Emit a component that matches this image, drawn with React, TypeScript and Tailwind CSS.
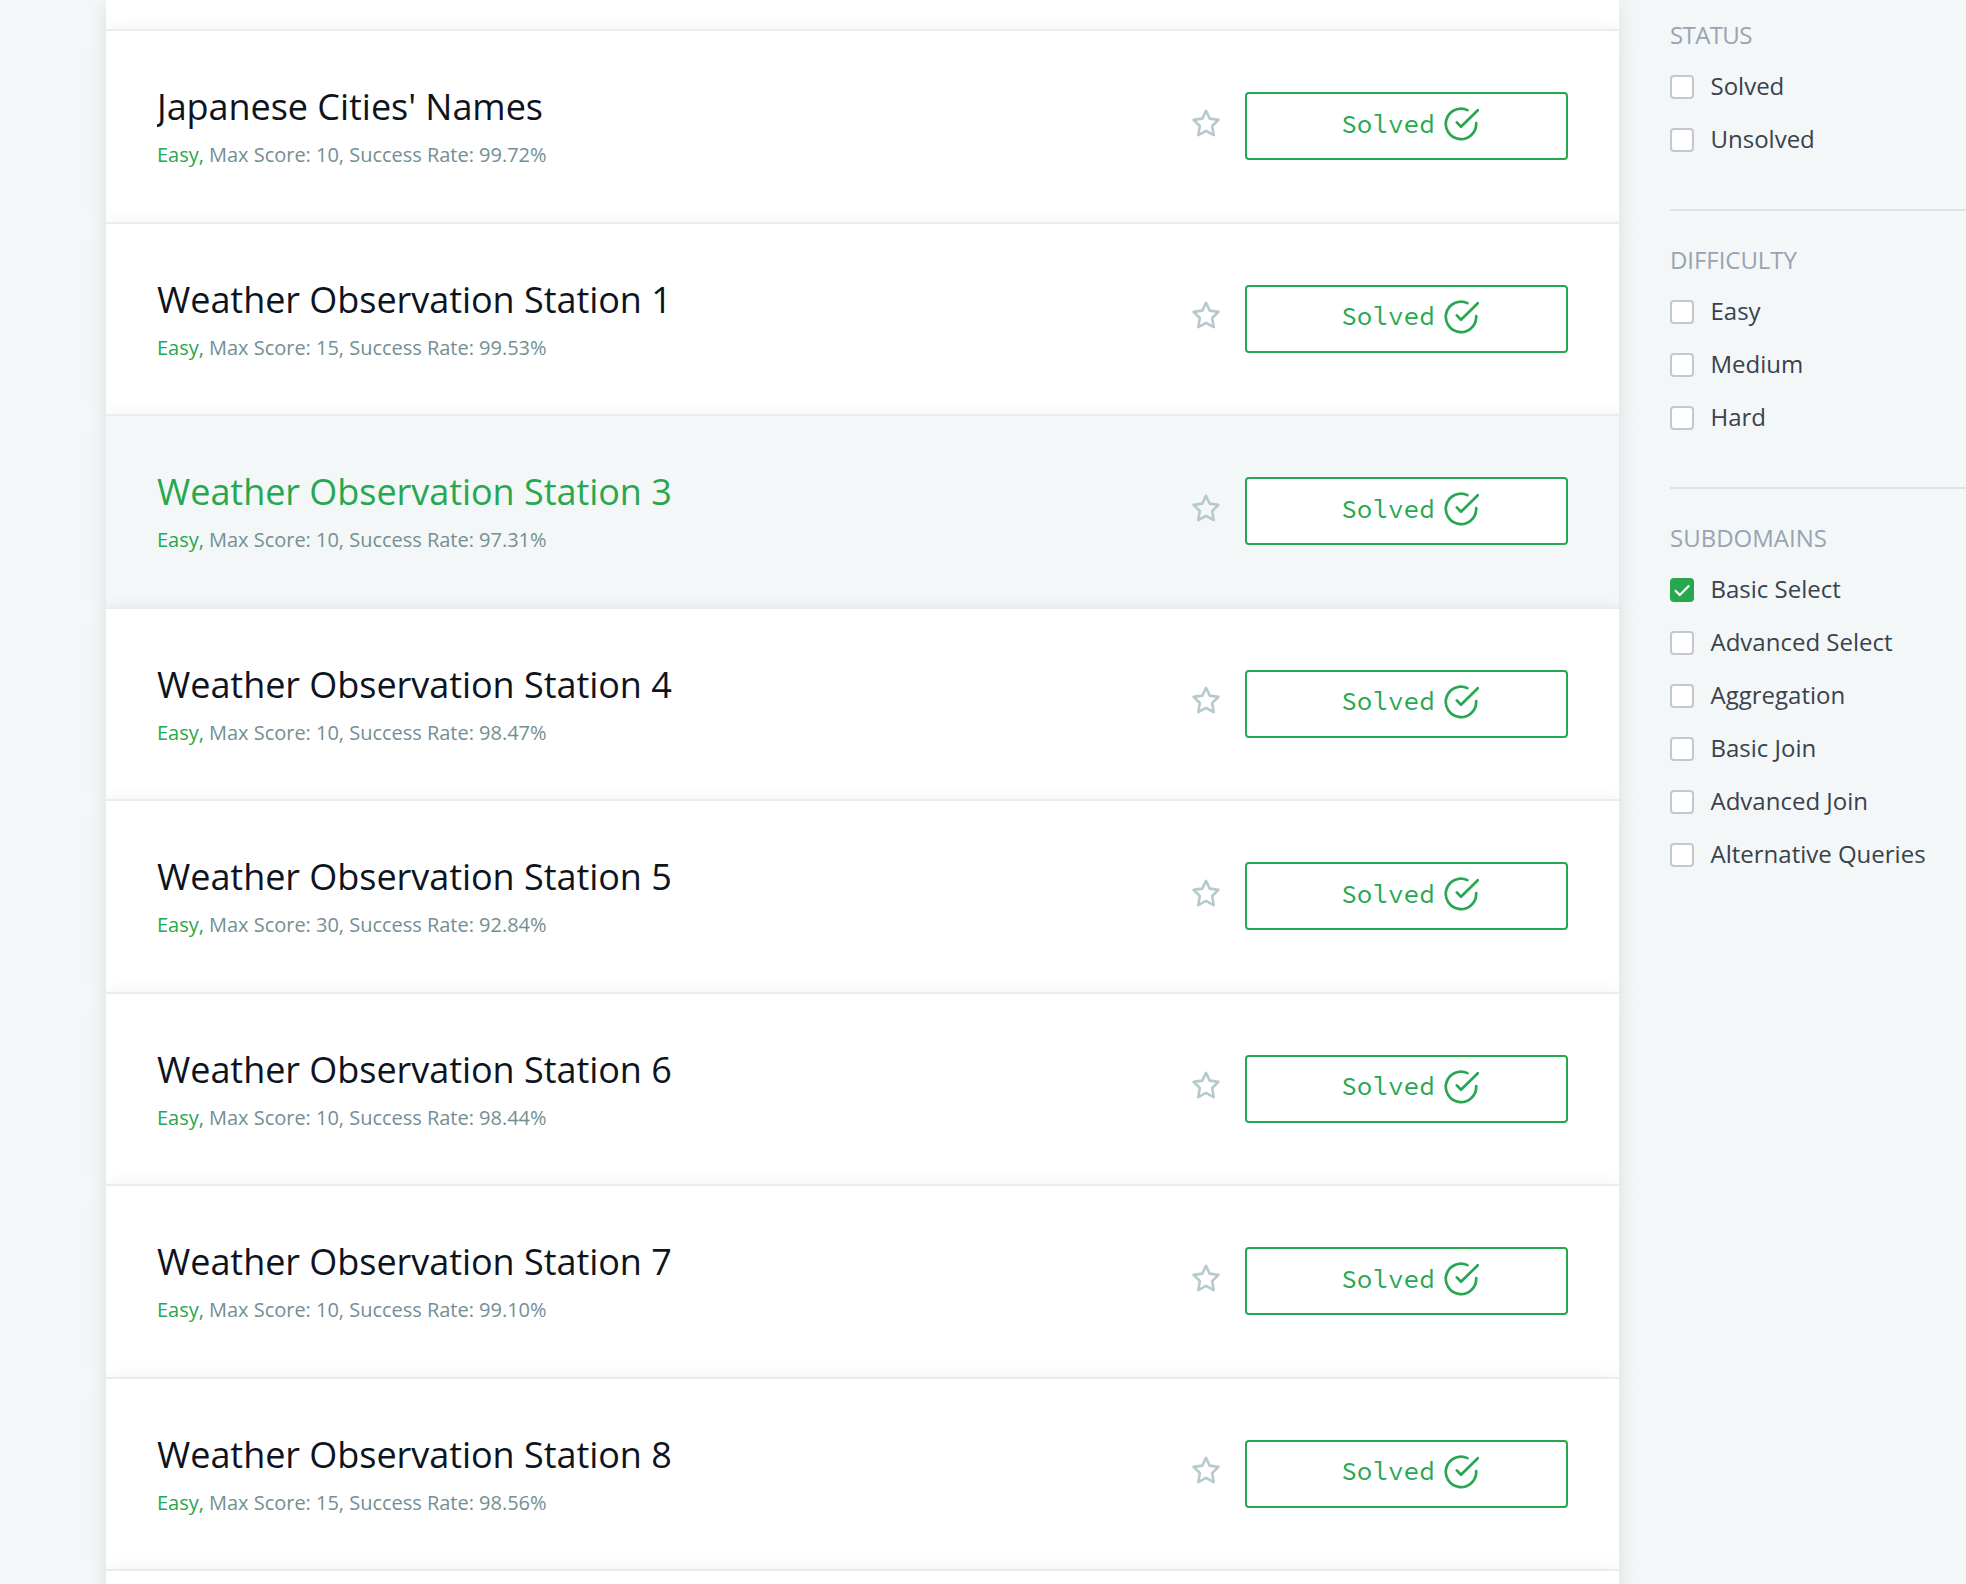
type Challenge = { title: string; score: number; rate: string; active?: boolean };

const challenges: Challenge[] = [
  { title: "Japanese Cities' Names", score: 10, rate: "99.72" },
  { title: "Weather Observation Station 1", score: 15, rate: "99.53" },
  { title: "Weather Observation Station 3", score: 10, rate: "97.31", active: true },
  { title: "Weather Observation Station 4", score: 10, rate: "98.47" },
  { title: "Weather Observation Station 5", score: 30, rate: "92.84" },
  { title: "Weather Observation Station 6", score: 10, rate: "98.44" },
  { title: "Weather Observation Station 7", score: 10, rate: "99.10" },
  { title: "Weather Observation Station 8", score: 15, rate: "98.56" },
];

const groups = [
  { name: "STATUS", tracking: "tracking-[-0.6px]", options: ["Solved", "Unsolved"] },
  { name: "DIFFICULTY", tracking: "tracking-[-0.05px]", options: ["Easy", "Medium", "Hard"] },
  {
    name: "SUBDOMAINS",
    tracking: "tracking-normal",
    options: ["Basic Select", "Advanced Select", "Aggregation", "Basic Join", "Advanced Join", "Alternative Queries"],
  },
];

const cardFrame = "border-t-2 border-[#e7eef0] shadow-[0_5px_20px_rgba(0,0,0,0.1)]";

function StarIcon() {
  return (
    <svg viewBox="0 0 28 28" className="h-7 w-7" fill="none" stroke="#b7c9cc" strokeWidth="2.6" strokeLinejoin="round">
      <path d="M14 1.8 17.7 9.6 26.4 10.9 20.2 17 21.7 26.1 14 21.8 6.3 26.1 7.8 17 1.6 10.9 10.3 9.6Z" />
    </svg>
  );
}

function CheckCircleIcon() {
  return (
    <svg
      viewBox="0 0 36 36"
      className="h-9 w-9"
      fill="none"
      stroke="currentColor"
      strokeWidth="2.7"
      strokeLinecap="round"
      strokeLinejoin="round"
    >
      <path d="M33.2 17.2v.8a15.2 15.2 0 1 1-8.8-13.9" />
      <path d="M34.8 4.2 18 20.8 13.8 16.4" />
    </svg>
  );
}

function ChallengeRow({ title, score, rate, active }: Challenge) {
  return (
    <div
      className={`flex h-[192.5px] items-start justify-between px-[51px] ${cardFrame} ${active ? "bg-[#f3f7f7]" : "bg-white"}`}
    >
      <div className="overflow-hidden pt-[51px]">
        <h4 className={`text-[36px] leading-[50px] tracking-[-0.04px] ${active ? "text-[#27a750]" : "text-[#0e141e]"}`}>
          {title}
        </h4>
        <p className="mt-[8px] text-[20px] leading-[30px] tracking-[-0.02px] text-[#738f93]">
          <span className="text-[#27a750]">Easy,</span> Max Score: {score}, Success Rate: {rate}%
        </p>
      </div>
      <div className="flex items-center pt-[61px]">
        <div className="-mt-[6.5px] mr-[25px]">
          <StarIcon />
        </div>
        <button className="flex h-[68px] w-[323px] items-center justify-center gap-[8px] rounded-[4px] border-2 border-[#27a750] bg-white pb-[4px] pl-[7px] font-['Source_Code_Pro','Liberation_Mono',monospace] text-[26px] text-[#27a750]">
          <span className="-mt-[2px]">Solved</span>
          <CheckCircleIcon />
        </button>
      </div>
    </div>
  );
}

function Checkbox({ checked }: { checked: boolean }) {
  if (!checked) return <span className="h-6 w-6 rounded-[4px] border-2 border-[#c2c7d0] bg-white" />;
  return (
    <span className="h-6 w-6 rounded-[4px] bg-[#27a750]">
      <svg viewBox="0 0 24 24" className="h-6 w-6" fill="none" stroke="#fff" strokeWidth="2.1">
        <path d="M5 12.2 9.8 17 19.2 7.6" />
      </svg>
    </span>
  );
}

export default function App() {
  return (
    <div className="flex h-[1584px] w-[1966px] overflow-hidden bg-[#f3f7f7] font-['Open_Sans',sans-serif]">
      <main className="ml-[106px] w-[1513px] shrink-0">
        <div className="h-[29px] bg-white shadow-[0_5px_20px_rgba(0,0,0,0.1)]" />
        {challenges.map((c) => (
          <ChallengeRow key={c.title} {...c} />
        ))}
        <div className={`h-[192.5px] bg-white ${cardFrame}`} />
      </main>
      <aside className="ml-[51px] flex-1 pt-[18px]">
        {groups.map((g, i) => (
          <section key={g.name} className={i > 0 ? "mt-[42.5px] border-t-2 border-[#dde3e9] pt-[32px]" : ""}>
            <h5 className={`text-[24px] leading-[34px] text-[#9aa3b3] ${g.tracking}`}>{g.name}</h5>
            <ul className="mt-[8.5px]">
              {g.options.map((o) => (
                <li key={o} className="flex h-[53px] items-center gap-[16.5px] text-[24px] text-[#39424e]">
                  <Checkbox checked={o === "Basic Select"} />
                  <span className="-mt-[2px]">{o}</span>
                </li>
              ))}
            </ul>
          </section>
        ))}
      </aside>
    </div>
  );
}
